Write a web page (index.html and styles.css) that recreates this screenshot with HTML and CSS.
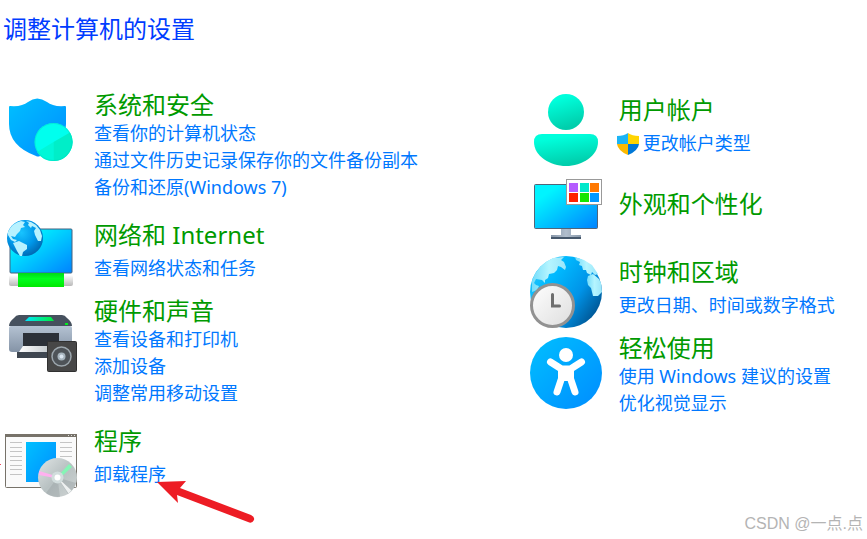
FILE: index.html
```html
<!DOCTYPE html>
<html lang="zh-CN">
<head>
  <meta charset="UTF-8">
  <meta name="viewport" content="width=device-width, initial-scale=1.0">
  <title>控制面板</title>
  <link rel="stylesheet" href="styles.css">
</head>
<body>
  <h1>调整计算机的设置</h1>
  <main class="categories">
    <div class="column">
      <section class="category">
        <svg class="icon" viewBox="0 0 72 76" aria-hidden="true">
          <defs>
            <linearGradient id="blue" x1="0" y1="0" x2="1" y2="1"><stop offset="0" stop-color="#00c0ff"/><stop offset="1" stop-color="#008cff"/></linearGradient>
            <linearGradient id="screen" x1="0" y1="0" x2="1" y2="1"><stop offset="0.2" stop-color="#00f4ff"/><stop offset="1" stop-color="#0082ff"/></linearGradient>
          </defs>
          <path fill="url(#blue)" d="M4 17q0-1 1-1 12 1 18-4 9-7 19 0 6 5 18 4 1 0 1 1v17q0 22-26 32-2 1-4 0Q4 56 4 34z"/>
          <circle cx="48.500" cy="52" r="19" fill="#00ffee"/>
          <path fill="#00f7d8" d="M48.500 52v19A19 19 0 0 1 32 62z"/>
          <path fill="#00eec8" d="M48.500 52v19A19 19 0 0 0 65 42.500z"/>
          <circle cx="48.500" cy="52" r="18.500" fill="none" stroke="#00dcc0" stroke-opacity=".5"/>
        </svg>
        <div class="details">
          <h2><a href="#">系统和安全</a></h2>
          <ul>
            <li><a href="#">查看你的计算机状态</a></li>
            <li><a href="#">通过文件历史记录保存你的文件备份副本</a></li>
            <li><a href="#">备份和还原(Windows 7)</a></li>
          </ul>
        </div>
      </section>

      <section class="category single">
        <svg class="icon" viewBox="0 0 72 76" aria-hidden="true">
          <defs>
            <radialGradient id="globe" cx=".4" cy=".35" r=".7"><stop offset="0" stop-color="#18c4ff"/><stop offset=".55" stop-color="#0098ea"/><stop offset="1" stop-color="#0065ae"/></radialGradient>
            <linearGradient id="plug" x1="0" y1="0" x2="0" y2="1"><stop offset="0" stop-color="#fff"/><stop offset="1" stop-color="#b9b9b9"/></linearGradient>
            <linearGradient id="cable" x1="0" y1="0" x2="0" y2="1"><stop offset="0" stop-color="#00d818"/><stop offset=".4" stop-color="#00ff20"/><stop offset="1" stop-color="#00e800"/></linearGradient>
          </defs>
          <rect x="5" y="9" width="62" height="44" rx="1" fill="url(#screen)" stroke="#47617c"/>
          <rect x="4" y="55" width="64" height="11" rx="2" fill="url(#plug)"/>
          <rect x="13" y="53" width="46" height="14" fill="url(#cable)"/>
          <circle cx="20" cy="18" r="18" fill="url(#globe)"/>
          <g fill="#b8f2ff">
            <path d="M3 12Q7 3 16 1l4 1-2 3 2 2-4 1-1 3-3 3-2 3-4-1 2 3 4 1-2 2-4-2-3-5z"/>
            <path d="M8 23l6-2 4 2 4 2v4l-4 3-1 4-2 0-3-5z"/>
            <path d="M21 1l5 1 5 3 4 5 2 6-1 5-3 0-3-6-1-4 2-3-4-2-1 2-3-3 1-2z"/>
          </g>
        </svg>
        <div class="details">
          <h2><a href="#">网络和 Internet</a></h2>
          <ul>
            <li><a href="#">查看网络状态和任务</a></li>
          </ul>
        </div>
      </section>

      <section class="category">
        <svg class="icon" viewBox="0 0 72 76" aria-hidden="true">
          <defs>
            <linearGradient id="body" x1="0" y1="0" x2="0" y2="1"><stop offset="0" stop-color="#b4c2d2"/><stop offset="1" stop-color="#8493a6"/></linearGradient>
            <linearGradient id="panel"><stop offset="0" stop-color="#00e5ff"/><stop offset="1" stop-color="#00ed3c"/></linearGradient>
            <linearGradient id="paper"><stop offset="0" stop-color="#fff"/><stop offset="1" stop-color="#b9c0c5"/></linearGradient>
          </defs>
          <path fill="url(#body)" d="M4 32q0-2 2-2h59q2 0 2 2v24H7q-3 0-3-3z"/>
          <path fill="#46515e" d="M14 19h43q3 0 5 3 5 4 5 8H4q0-4 5-8 2-3 5-3z"/>
          <path fill="url(#panel)" d="M24 21h22l3 4H20z"/>
          <rect x="60" y="27" width="3" height="2" fill="#00f020"/>
          <path fill="#2b3038" d="M18 37h36v19H18z"/>
          <path fill="#3e4650" d="M12 56h32v6H12z"/>
          <path fill="url(#paper)" d="M18 50h31v6H14z"/>
          <rect x="42.500" y="45.500" width="29" height="30" rx="1" fill="#474747" stroke="#303030"/>
          <circle cx="56.500" cy="60.500" r="9.500" fill="#4e5358" stroke="#9ca6ad" stroke-width="1.500"/>
          <circle cx="56.500" cy="60.500" r="4" fill="#a7b4bd"/>
          <circle cx="56.500" cy="60.500" r="2" fill="#dae5ef"/>
        </svg>
        <div class="details">
          <h2><a href="#">硬件和声音</a></h2>
          <ul>
            <li><a href="#">查看设备和打印机</a></li>
            <li><a href="#">添加设备</a></li>
            <li><a href="#">调整常用移动设置</a></li>
          </ul>
        </div>
      </section>

      <section class="category single">
        <svg class="icon" viewBox="0 0 72 76" aria-hidden="true">
          <defs>
            <linearGradient id="disc" x1="0" y1="0" x2="1" y2="1"><stop offset="0" stop-color="#e0e5e5"/><stop offset=".5" stop-color="#b8c1c2"/><stop offset="1" stop-color="#cfd4d4"/></linearGradient>
          </defs>
          <path d="M-5 38.500h1" stroke="#f04860" stroke-width="1"/>
          <rect x=".5" y="8.500" width="71" height="53" rx="1" fill="#fafafa" stroke="#777269"/>
          <path fill="#777269" d="M0 8h72v3H0z"/>
          <path fill="#ddd" d="M63 9h1v1h-1zM66 9h1v1h-1zM69 9h1v1h-1z"/>
          <path stroke="#c4c4c4" d="M5 16.500h12M5 21.500h12M5 25.500h12M5 30.500h12M5 34.500h12M5 39.500h12M5 43.500h12M5 48.500h12M55 16.500h12M55 21.500h12M55 25.500h12M55 30.500h12"/>
          <rect x="21" y="16" width="30" height="40" fill="url(#blue)"/>
          <circle cx="52.500" cy="51.500" r="19.500" fill="url(#disc)"/>
          <path fill="#8f999b" opacity=".35" d="M52.500 51.500L41 67a19 19 0 0 0 14 4zM52.500 51.500L71 57a20 20 0 0 1-8 11z"/>
          <path fill="#eef1f1" d="M52.500 51.500l11 16 3-3z"/>
          <path fill="#ffb0ef" d="M34 45v4l16 3 1-2z"/>
          <path fill="#85f5b5" d="M53 50l11-12 3 3-12 11z"/>
          <circle cx="52.500" cy="51.500" r="6" fill="#d2dddd"/>
          <circle cx="52.500" cy="51.500" r="3" fill="#fff"/>
        </svg>
        <div class="details">
          <h2><a href="#">程序</a></h2>
          <ul>
            <li class="pointed">
              <a href="#">卸载程序</a>
              <svg class="arrow" viewBox="0 0 100 44" aria-hidden="true"><path fill="#ed1c24" d="M0 1l29-1-6 7 71 27q4 2 3 5-2 4-6 2L20 14l1 8z"/></svg>
            </li>
          </ul>
        </div>
      </section>
    </div>

    <div class="column column-right">
      <section class="category single">
        <svg class="icon" viewBox="0 0 72 76" aria-hidden="true">
          <defs>
            <linearGradient id="teal" x1="0" y1="0" x2=".3" y2="1"><stop offset="0.2" stop-color="#00ffdc"/><stop offset="1" stop-color="#00ceac"/></linearGradient>
          </defs>
          <circle cx="36" cy="17" r="18" fill="url(#teal)"/>
          <path fill="url(#teal)" d="M12 39h48q8 0 8 8c0 14-16 24-32 24S4 61 4 47q0-8 8-8z"/>
        </svg>
        <div class="details">
          <h2><a href="#">用户帐户</a></h2>
          <ul>
            <li class="admin">
              <svg class="shield" viewBox="0 0 22 22" aria-hidden="true">
                <path fill="#1cb4f5" d="M11 0Q7 3 0 3v8h11z"/>
                <path fill="#ffd400" d="M11 0q4 3 11 3v8H11z"/>
                <path fill="#fcb900" d="M0 11h11v11Q1 18 0 11z"/>
                <path fill="#0078d7" d="M22 11H11v11q10-4 11-11z"/>
              </svg>
              <a href="#">更改帐户类型</a>
            </li>
          </ul>
        </div>
      </section>

      <section class="category title-only">
        <svg class="icon" viewBox="0 0 72 76" aria-hidden="true">
          <defs>
            <linearGradient id="stand"><stop offset="0" stop-color="#8796a8"/><stop offset=".5" stop-color="#b1becd"/><stop offset="1" stop-color="#8a9aab"/></linearGradient>
          </defs>
          <rect x="4.500" y="13.500" width="63" height="44" rx="1" fill="url(#screen)" stroke="#526579"/>
          <path fill="url(#stand)" d="M31 58h10v6h10v2H21v-2h10z"/>
          <path fill="#46586c" d="M21 66h30v2H21z"/>
          <rect x="36.500" y="8.500" width="35" height="25" fill="#fff" stroke="#999"/>
          <path fill="#b55cff" d="M39 12h9v9h-9z"/>
          <path fill="#00e8cc" d="M50 12h9v9h-9z"/>
          <path fill="#ff7800" d="M60 12h9v9h-9z"/>
          <path fill="#ff2000" d="M39 22h9v9h-9z"/>
          <path fill="#16e600" d="M50 22h9v9h-9z"/>
          <path fill="#0099ff" d="M60 22h9v9h-9z"/>
        </svg>
        <div class="details">
          <h2><a href="#">外观和个性化</a></h2>
        </div>
      </section>

      <section class="category single">
        <svg class="icon" viewBox="0 0 72 76" aria-hidden="true">
          <defs>
            <linearGradient id="earth" x1="0" y1=".1" x2="1" y2=".8"><stop offset="0" stop-color="#32c5f5"/><stop offset=".3" stop-color="#00baff"/><stop offset=".65" stop-color="#0094e8"/><stop offset="1" stop-color="#004c87"/></linearGradient>
            <linearGradient id="land"><stop offset="0" stop-color="#74dcfa"/><stop offset=".5" stop-color="#b5f5ff"/><stop offset="1" stop-color="#9be6fa"/></linearGradient>
            <linearGradient id="face" x1="0" y1="0" x2="1" y2="1"><stop offset="0" stop-color="#fff"/><stop offset="1" stop-color="#ddd"/></linearGradient>
          </defs>
          <circle cx="36" cy="35" r="36" fill="url(#earth)"/>
          <path fill="url(#land)" d="M2 24Q7 8 23 1l11-1-3 3 3 2 2 5-1 3-4-3-3-1-1 4-3 3-5 1-1 4-3 2 0 3-3-3-6-1-2 4 2 2 3 1-2 4-5 2z"/>
          <path fill="url(#land)" d="M45 0l9 3 8 5 6 9-3 1-3-3-1 3-4-2-1-3-3 0-1-4-3-1 1-3-4-2z"/>
          <path fill="url(#land)" d="M58 19l5-2 6 5 2 4 1 9-4 4-5 0-2-8-3-3-1-5z"/>
          <circle cx="22.500" cy="48.500" r="21" fill="url(#face)" stroke="#929292" stroke-width="3"/>
          <path fill="none" stroke="#6e6e6e" stroke-width="3" stroke-linecap="round" d="M22.500 37.500v11.500H29.500"/>
        </svg>
        <div class="details">
          <h2><a href="#">时钟和区域</a></h2>
          <ul>
            <li><a href="#">更改日期、时间或数字格式</a></li>
          </ul>
        </div>
      </section>

      <section class="category">
        <svg class="icon" viewBox="0 0 72 76" aria-hidden="true">
          <circle cx="36" cy="40" r="36" fill="url(#blue)"/>
          <circle cx="36" cy="22" r="7" fill="#fff"/>
          <path fill="none" stroke="#fff" stroke-width="7" stroke-linecap="round" stroke-linejoin="round" d="M20.500 29l11 7h9l11-7M32 44l-5 15M40 44l5 15"/>
          <path fill="#fff" d="M28 33q8 5 16 0v15l-3 5-3-5h-4l-3 5-3-5z"/>
        </svg>
        <div class="details">
          <h2><a href="#">轻松使用</a></h2>
          <ul>
            <li><a href="#">使用 Windows 建议的设置</a></li>
            <li><a href="#">优化视觉显示</a></li>
          </ul>
        </div>
      </section>
    </div>
  </main>
  <footer class="watermark">CSDN @一点.点</footer>
</body>
</html>
```

FILE: styles.css
```css
body {
  box-sizing: border-box;
  min-height: 100vh;
  margin: 0;
  padding: 14px 0 0 5px;
  background-color: #fff;
  font-family: "Noto Sans", "Noto Sans CJK SC", sans-serif;
  font-size: 18px;
  line-height: 27px;
}
h1, h2 {
  margin: 0;
  font-size: 24px;
  font-weight: normal;
  line-height: 30px;
}
h1 {
  margin-left: -2px;
  color: #003cff;
}
a {
  color: #0078ff;
  text-decoration: none;
}
a:hover {
  text-decoration: underline;
}
h2 a {
  color: #009a00;
}
ul {
  margin: 0;
  padding: 0;
  list-style: none;
}
.categories {
  display: grid;
  grid-template-columns: 14fr 9fr;
  margin-top: 46px;
}
.column-right {
  padding-top: 5px;
}
.category {
  display: flex;
  gap: 17px;
}
.category + .single {
  margin-top: 19px;
}
.column-right .category + .single {
  margin-top: 10px;
}
.single ul {
  margin-top: 5px;
}
.title-only .details {
  padding-top: 18px;
}
.icon {
  flex: none;
  width: 72px;
  height: 76px;
  overflow: visible;
}
.details {
  white-space: nowrap;
}
.admin {
  display: flex;
  align-items: center;
  gap: 4px;
  margin-left: -2px;
}
.shield {
  width: 22px;
  height: 22px;
}
.pointed {
  position: relative;
}
.arrow {
  position: absolute;
  top: 20px;
  left: 63px;
  width: 100px;
  height: 44px;
}
.watermark {
  position: absolute;
  right: 4px;
  bottom: 2px;
  color: #b4b4b4;
  font-family: "Liberation Sans", "Noto Sans CJK SC", sans-serif;
  font-size: 16px;
}
```
